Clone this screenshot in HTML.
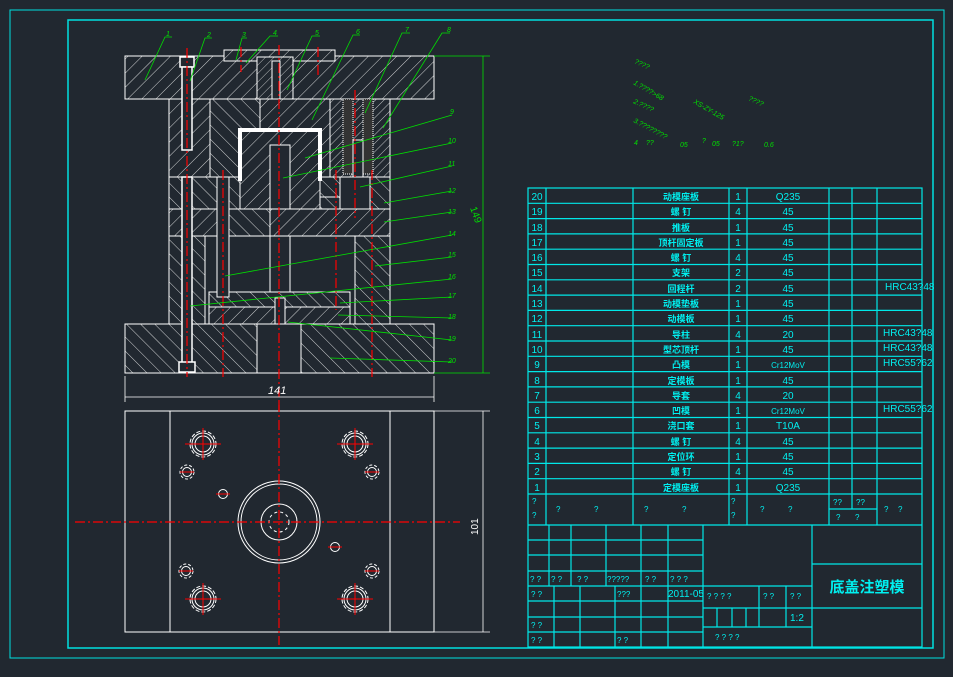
<!DOCTYPE html>
<html><head><meta charset="utf-8"><style>
html,body{margin:0;padding:0;background:#212830;}
svg{display:block}
.t{font-family:"Liberation Sans","Noto Sans CJK SC",sans-serif;fill:#00f0f0;}
.c{font-family:"Liberation Sans","Noto Sans CJK SC",sans-serif;fill:#00f0f0;font-weight:bold;}
.g{font-family:"Liberation Sans",sans-serif;fill:#00e000;font-size:7px;font-style:italic}
</style></head><body>
<svg width="953" height="677" viewBox="0 0 953 677" xmlns="http://www.w3.org/2000/svg">
<defs>
<pattern id="ha" width="10" height="10" patternUnits="userSpaceOnUse" patternTransform="rotate(45)"><rect width="10" height="10" fill="#212830"/><line x1="0" y1="0" x2="0" y2="10" stroke="#fff" stroke-width="0.8"/></pattern>
<pattern id="hb" width="10" height="10" patternUnits="userSpaceOnUse" patternTransform="rotate(-45)"><rect width="10" height="10" fill="#212830"/><line x1="0" y1="0" x2="0" y2="10" stroke="#fff" stroke-width="0.8"/></pattern>
<pattern id="hc" width="6" height="6" patternUnits="userSpaceOnUse" patternTransform="rotate(45)"><rect width="6" height="6" fill="#212830"/><line x1="0" y1="0" x2="0" y2="6" stroke="#fff" stroke-width="0.7"/></pattern>
<g id="gb" fill="none" stroke="#fff"><circle r="13" stroke-dasharray="4 2"/><circle r="11"/><circle r="8"/></g>
<g id="sb" fill="none" stroke="#fff"><circle r="7" stroke-dasharray="3 2"/><circle r="4.5"/></g>
</defs>
<rect width="953" height="677" fill="#212830"/>
<rect x="10" y="10" width="934" height="648" fill="none" stroke="#00e0e0" stroke-width="1"/>
<rect x="68" y="20" width="865" height="628" fill="none" stroke="#00e0e0" stroke-width="1.5"/>

<!-- ELEVATION -->
<g stroke="#fff" stroke-width="1">
<rect x="125" y="56" width="309" height="43" fill="url(#ha)"/>
<rect x="224" y="50" width="111" height="11" fill="url(#ha)"/>
<rect x="257" y="57" width="36" height="71" fill="url(#hc)"/>
<rect x="272" y="61" width="8" height="67" fill="#212830"/>
<rect x="169" y="99" width="221" height="78" fill="url(#ha)"/>
<rect x="210" y="99" width="50" height="78" fill="url(#hb)"/>
<rect x="330" y="99" width="60" height="78" fill="url(#hc)"/>
<rect x="343" y="99" width="10" height="75" fill="#333" stroke-dasharray="1 1"/>
<rect x="363" y="99" width="10" height="75" fill="#333" stroke-dasharray="1 1"/>
<rect x="353" y="140" width="10" height="40" fill="#212830"/>
<rect x="169" y="177" width="221" height="32" fill="url(#hb)"/>
<rect x="240" y="130" width="80" height="80" fill="url(#ha)"/>
<rect x="270" y="145" width="20" height="160" fill="#212830"/>
<rect x="320" y="177" width="25" height="20" fill="url(#hb)"/>
<rect x="340" y="177" width="30" height="32" fill="#212830"/>
<rect x="169" y="209" width="221" height="27" fill="url(#ha)"/>
<rect x="228" y="209" width="42" height="27" fill="url(#hb)"/>
<rect x="169" y="236" width="36" height="88" fill="url(#hb)"/>
<rect x="355" y="236" width="35" height="88" fill="url(#hb)"/>
<rect x="209" y="292" width="141" height="15" fill="url(#hb)"/>
<rect x="209" y="307" width="141" height="17" fill="url(#ha)"/>
<rect x="125" y="324" width="309" height="49" fill="url(#hb)"/>
<rect x="257" y="324" width="44" height="49" fill="#212830"/>
<rect x="180" y="57" width="14" height="10" fill="#212830" stroke-width="1.5"/>
<rect x="182" y="67" width="10" height="83" fill="#212830" stroke-width="1.5"/>
<rect x="182" y="177" width="10" height="190" fill="#212830" stroke-width="1.5"/>
<rect x="179" y="362" width="16" height="10" fill="#212830" stroke-width="1.5"/>
<rect x="217" y="177" width="12" height="120" fill="#212830"/>
<rect x="275" y="298" width="10" height="26" fill="#212830"/>
</g>
<path d="M240,181 V130 H320 V181" fill="none" stroke="#fff" stroke-width="4"/>
<g stroke="#f00" stroke-width="1.2" stroke-dasharray="10 3 2 3">
<line x1="187" y1="48" x2="187" y2="377"/>
<line x1="279" y1="45" x2="279" y2="410"/>
<line x1="223" y1="170" x2="223" y2="377"/>
<line x1="336" y1="170" x2="336" y2="310"/>
<line x1="372" y1="170" x2="372" y2="377"/>
<line x1="318" y1="47" x2="318" y2="75"/>
<line x1="355" y1="90" x2="355" y2="218"/>
<line x1="241" y1="47" x2="241" y2="72"/>
</g>
<g stroke="#fff" stroke-width="0.8">
<line x1="125" y1="376" x2="125" y2="402"/><line x1="434" y1="376" x2="434" y2="402"/>
<line x1="125" y1="397" x2="434" y2="397"/>
</g>
<text x="268" y="394" fill="#fff" font-family="Liberation Sans" font-size="11" font-style="italic">141</text>
<g stroke="#00e000" stroke-width="0.8">
<line x1="434" y1="56" x2="490" y2="56"/><line x1="434" y1="373" x2="490" y2="373"/>
<line x1="483" y1="56" x2="483" y2="373"/>
</g>
<text x="0" y="0" fill="#00e000" font-family="Liberation Sans" font-size="10" transform="translate(470,208) rotate(70)">149</text>
<g stroke="#00e000" stroke-width="0.8" fill="none">
<path d="M145,80 L165,37 H172"/>
<path d="M190,81 L205,38 H212"/>
<path d="M236,60 L242,38 H247"/>
<path d="M246,63 L270,36 H278"/>
<path d="M287,90 L312,36 H320"/>
<path d="M312,120 L353,35 H360"/>
<path d="M365,113 L402,33 H410"/>
<path d="M383,128 L442,33 H450"/>
<path d="M305,158 L452,115"/><path d="M283,178 L452,143"/>
<path d="M360,187 L452,166"/><path d="M384,203 L452,191"/>
<path d="M384,222 L452,212"/><path d="M225,276 L452,235"/>
<path d="M375,266 L452,257"/><path d="M190,306 L452,279"/>
<path d="M340,303 L452,297"/><path d="M338,315 L452,318"/>
<path d="M288,322 L452,340"/><path d="M330,358 L452,362"/>
</g>
<g class="g">
<text x="166" y="36">1</text><text x="207" y="37">2</text><text x="242" y="37">3</text><text x="273" y="35">4</text><text x="315" y="35">5</text><text x="356" y="34">6</text><text x="405" y="32">7</text><text x="447" y="32">8</text>
<text x="450" y="114">9</text><text x="448" y="143">10</text><text x="448" y="166">11</text><text x="448" y="193">12</text><text x="448" y="214">13</text><text x="448" y="236">14</text><text x="448" y="257">15</text><text x="448" y="279">16</text><text x="448" y="298">17</text><text x="448" y="319">18</text><text x="448" y="341">19</text><text x="448" y="363">20</text>
</g>

<!-- PLAN VIEW -->
<g stroke="#fff" stroke-width="1" fill="none">
<rect x="125" y="411" width="309" height="221"/>
<line x1="170" y1="411" x2="170" y2="632"/><line x1="390" y1="411" x2="390" y2="632"/>
<circle cx="279" cy="522" r="41"/><circle cx="279" cy="522" r="38"/><circle cx="279" cy="522" r="18"/>
<circle cx="279" cy="522" r="10" stroke-dasharray="3 3"/>
<circle cx="223" cy="494" r="4.5"/><circle cx="335" cy="547" r="4.5"/>
</g>
<use href="#gb" x="203" y="444"/><use href="#gb" x="355" y="444"/><use href="#gb" x="203" y="599"/><use href="#gb" x="355" y="599"/>
<use href="#sb" x="187" y="472"/><use href="#sb" x="372" y="472"/><use href="#sb" x="186" y="571"/><use href="#sb" x="372" y="571"/>
<g stroke="#f00" stroke-width="1.2" stroke-dasharray="10 3 2 3">
<line x1="75" y1="522" x2="460" y2="522"/><line x1="279" y1="402" x2="279" y2="645"/>
</g>
<g stroke="#f00" stroke-width="1">
<line x1="185" y1="444" x2="221" y2="444"/><line x1="203" y1="428" x2="203" y2="460"/>
<line x1="337" y1="444" x2="373" y2="444"/><line x1="355" y1="428" x2="355" y2="460"/>
<line x1="185" y1="599" x2="221" y2="599"/><line x1="203" y1="583" x2="203" y2="615"/>
<line x1="337" y1="599" x2="373" y2="599"/><line x1="355" y1="583" x2="355" y2="615"/>
<line x1="180" y1="472" x2="194" y2="472"/><line x1="365" y1="472" x2="379" y2="472"/>
<line x1="179" y1="571" x2="193" y2="571"/><line x1="365" y1="571" x2="379" y2="571"/>
<line x1="216" y1="494" x2="230" y2="494"/><line x1="328" y1="547" x2="342" y2="547"/>
</g>
<g stroke="#fff" stroke-width="0.8">
<line x1="434" y1="411" x2="490" y2="411"/><line x1="434" y1="632" x2="490" y2="632"/>
<line x1="483" y1="411" x2="483" y2="632"/>
</g>
<text transform="translate(478,535) rotate(-90)" fill="#fff" font-family="Liberation Sans" font-size="10">101</text>

<g class="g" font-size="6">
<text transform="translate(634,63) rotate(25)">????</text>
<text transform="translate(633,84) rotate(30)">1.????&gt;68</text>
<text transform="translate(633,103) rotate(25)">2.????</text>
<text transform="translate(633,122) rotate(28)">3.????????</text>
<text transform="translate(693,103) rotate(30)">XS-ZY-125</text>
<text transform="translate(748,100) rotate(25)">????</text>
<text x="634" y="145">4</text><text x="646" y="145">??</text><text x="680" y="147">05</text><text x="702" y="143">?</text><text x="712" y="146">05</text><text x="732" y="146">?1?</text><text x="764" y="147">0.6</text>
</g>

<!-- PARTS TABLE -->
<g stroke="#00e8e8" stroke-width="1.2" fill="none">
<rect x="528" y="188" width="394" height="459"/>
<line x1="546" y1="188" x2="546" y2="525"/><line x1="633" y1="188" x2="633" y2="525"/>
<line x1="729" y1="188" x2="729" y2="525"/><line x1="747" y1="188" x2="747" y2="525"/>
<line x1="829" y1="188" x2="829" y2="525"/><line x1="852" y1="188" x2="852" y2="509"/>
<line x1="877" y1="188" x2="877" y2="525"/>
<line x1="829" y1="509" x2="877" y2="509"/>
<line x1="528" y1="525" x2="922" y2="525"/>
<line x1="703" y1="525" x2="703" y2="647"/><line x1="812" y1="525" x2="812" y2="647"/>
<line x1="528" y1="540" x2="703" y2="540"/><line x1="528" y1="555" x2="703" y2="555"/>
<line x1="528" y1="571" x2="703" y2="571"/><line x1="528" y1="586" x2="812" y2="586"/>
<line x1="528" y1="601" x2="703" y2="601"/><line x1="528" y1="617" x2="703" y2="617"/>
<line x1="528" y1="632" x2="703" y2="632"/>
<line x1="549" y1="525" x2="549" y2="586"/><line x1="571" y1="525" x2="571" y2="586"/>
<line x1="606" y1="525" x2="606" y2="586"/><line x1="641" y1="525" x2="641" y2="647"/>
<line x1="668" y1="525" x2="668" y2="647"/>
<line x1="554" y1="586" x2="554" y2="647"/><line x1="580" y1="586" x2="580" y2="647"/>
<line x1="615" y1="586" x2="615" y2="647"/>
<line x1="703" y1="608" x2="812" y2="608"/><line x1="703" y1="627" x2="812" y2="627"/>
<line x1="759" y1="586" x2="759" y2="627"/><line x1="786" y1="586" x2="786" y2="627"/>
<line x1="717" y1="608" x2="717" y2="627"/><line x1="732" y1="608" x2="732" y2="627"/><line x1="746" y1="608" x2="746" y2="627"/>
<line x1="812" y1="564" x2="922" y2="564"/><line x1="812" y1="608" x2="922" y2="608"/>
<line x1="528" y1="203.3" x2="922" y2="203.3"/><line x1="528" y1="218.6" x2="922" y2="218.6"/><line x1="528" y1="233.9" x2="922" y2="233.9"/><line x1="528" y1="249.2" x2="922" y2="249.2"/><line x1="528" y1="264.5" x2="922" y2="264.5"/><line x1="528" y1="279.8" x2="922" y2="279.8"/><line x1="528" y1="295.1" x2="922" y2="295.1"/><line x1="528" y1="310.4" x2="922" y2="310.4"/><line x1="528" y1="325.7" x2="922" y2="325.7"/><line x1="528" y1="341" x2="922" y2="341"/><line x1="528" y1="356.3" x2="922" y2="356.3"/><line x1="528" y1="371.6" x2="922" y2="371.6"/><line x1="528" y1="386.9" x2="922" y2="386.9"/><line x1="528" y1="402.2" x2="922" y2="402.2"/><line x1="528" y1="417.5" x2="922" y2="417.5"/><line x1="528" y1="432.8" x2="922" y2="432.8"/><line x1="528" y1="448.1" x2="922" y2="448.1"/><line x1="528" y1="463.4" x2="922" y2="463.4"/><line x1="528" y1="478.7" x2="922" y2="478.7"/><line x1="528" y1="494" x2="922" y2="494"/>
</g>
<g class="t" font-size="10" text-anchor="middle">
<text x="537" y="200">20</text><text x="537" y="215">19</text><text x="537" y="231">18</text><text x="537" y="246">17</text><text x="537" y="261">16</text><text x="537" y="276">15</text><text x="537" y="292">14</text><text x="537" y="307">13</text><text x="537" y="322">12</text><text x="537" y="338">11</text><text x="537" y="353">10</text><text x="537" y="368">9</text><text x="537" y="384">8</text><text x="537" y="399">7</text><text x="537" y="414">6</text><text x="537" y="429">5</text><text x="537" y="445">4</text><text x="537" y="460">3</text><text x="537" y="475">2</text><text x="537" y="491">1</text>
<text x="738" y="200">1</text><text x="738" y="215">4</text><text x="738" y="231">1</text><text x="738" y="246">1</text><text x="738" y="261">4</text><text x="738" y="276">2</text><text x="738" y="292">2</text><text x="738" y="307">1</text><text x="738" y="322">1</text><text x="738" y="338">4</text><text x="738" y="353">1</text><text x="738" y="368">1</text><text x="738" y="384">1</text><text x="738" y="399">4</text><text x="738" y="414">1</text><text x="738" y="429">1</text><text x="738" y="445">4</text><text x="738" y="460">1</text><text x="738" y="475">4</text><text x="738" y="491">1</text>
<text x="788" y="200">Q235</text><text x="788" y="215">45</text><text x="788" y="231">45</text><text x="788" y="246">45</text><text x="788" y="261">45</text><text x="788" y="276">45</text><text x="788" y="292">45</text><text x="788" y="307">45</text><text x="788" y="322">45</text><text x="788" y="338">20</text><text x="788" y="353">45</text><text x="788" y="368" font-size="8">Cr12MoV</text><text x="788" y="384">45</text><text x="788" y="399">20</text><text x="788" y="414" font-size="8">Cr12MoV</text><text x="788" y="429">T10A</text><text x="788" y="445">45</text><text x="788" y="460">45</text><text x="788" y="475">45</text><text x="788" y="491">Q235</text>
</g>
<g class="c" font-size="9" text-anchor="middle">
<text x="681" y="200">动模座板</text><text x="681" y="215">螺 钉</text><text x="681" y="231">推板</text><text x="681" y="246">顶杆固定板</text><text x="681" y="261">螺 钉</text><text x="681" y="276">支架</text><text x="681" y="292">回程杆</text><text x="681" y="307">动模垫板</text><text x="681" y="322">动模板</text><text x="681" y="338">导柱</text><text x="681" y="353">型芯顶杆</text><text x="681" y="368">凸模</text><text x="681" y="384">定模板</text><text x="681" y="399">导套</text><text x="681" y="414">凹模</text><text x="681" y="429">浇口套</text><text x="681" y="445">螺 钉</text><text x="681" y="460">定位环</text><text x="681" y="475">螺 钉</text><text x="681" y="491">定模座板</text>
</g>
<g class="t" font-size="10">
<text x="885" y="290">HRC43?48</text><text x="883" y="336">HRC43?48</text><text x="883" y="351">HRC43?48</text><text x="883" y="366">HRC55?62</text><text x="883" y="412">HRC55?62</text>
</g>
<g class="t" font-size="8">
<text x="532" y="504">?</text><text x="532" y="518">?</text><text x="556" y="512">?</text><text x="594" y="512">?</text><text x="644" y="512">?</text><text x="682" y="512">?</text><text x="731" y="504">?</text><text x="731" y="518">?</text><text x="760" y="512">?</text><text x="788" y="512">?</text>
<text x="833" y="505">??</text><text x="856" y="505">??</text><text x="836" y="520">?</text><text x="855" y="520">?</text><text x="884" y="512">?</text><text x="898" y="512">?</text>
<text x="530" y="582">? ?</text><text x="551" y="582">? ?</text><text x="577" y="582">? ?</text><text x="607" y="582">?????</text><text x="645" y="582">? ?</text><text x="670" y="582">? ? ?</text>
<text x="531" y="597">? ?</text><text x="617" y="597">???</text><text x="707" y="599">? ? ? ?</text><text x="763" y="599">? ?</text><text x="790" y="599">? ?</text>
<text x="531" y="628">? ?</text><text x="531" y="643">? ?</text><text x="617" y="643">? ?</text><text x="715" y="640">?    ?    ?    ?</text>
</g>
<text class="t" x="668" y="597" font-size="10">2011-05</text>
<text class="t" x="790" y="621" font-size="10">1:2</text>
<text class="c" x="867" y="592" font-size="15" text-anchor="middle">底盖注塑模</text>
</svg>
</body></html>
